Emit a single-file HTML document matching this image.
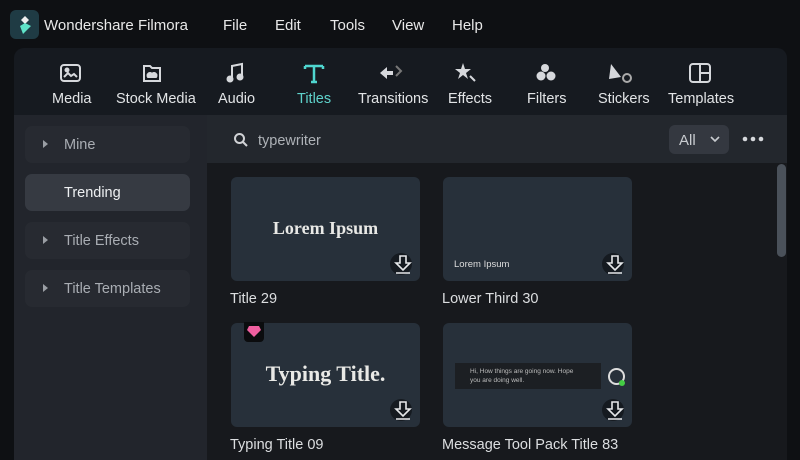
<!DOCTYPE html>
<html><head><style>
*{margin:0;padding:0;box-sizing:border-box}
body{width:800px;height:460px;background:#0e1013;font-family:"Liberation Sans",sans-serif;overflow:hidden;position:relative;color:#e6e8ea}
.a{position:absolute}
.menu{top:17px;font-size:15px;color:#e8e8e8}
.tb{top:48px;left:14px;width:773px;height:67px;background:#161a20;border-radius:10px 10px 0 0}
.tab{position:absolute;top:91px;font-size:14.5px;color:#e2e4e6;text-align:center}
.side{left:14px;top:115px;width:193px;height:345px;background:#22252c}
.it{position:absolute;left:25px;width:165px;height:37px;border-radius:7px;background:#272a31;font-size:14.5px;color:#a9adb3}
.it span{position:absolute;left:39px;top:11px}
.it i{position:absolute;left:18px;top:14px;border-left:5px solid #9a9ea4;border-top:4px solid transparent;border-bottom:4px solid transparent}
.srch{left:207px;top:115px;width:580px;height:48px;background:#23272d}
.grid{left:207px;top:163px;width:580px;height:297px;background:#17191d}
.card{position:absolute;width:189px;height:104px;border-radius:6px;background:#27303a}
.lbl{position:absolute;font-size:14.5px;color:#dcdee0}
.dl{position:absolute;right:8px;bottom:6px;width:22px;height:22px;border-radius:50%;background:#151a20}
.ser{font-family:"Liberation Serif",serif;color:#e9e9e6;position:absolute;width:100%;text-align:center;font-weight:bold}
</style></head><body>
<div class="a" style="left:10px;top:10px;width:29px;height:29px;border-radius:6px;background:#1f3b44"></div>
<svg class="a" style="left:14px;top:13px" width="22" height="24" viewBox="0 0 22 24"><path d="M11 3l4 4-4 4-4-4z" fill="#eee"/><path d="M6 13l5-3 6 3-8 8z" fill="#5fe3c8"/></svg>
<div class="a menu" style="left:44px">Wondershare Filmora</div>
<div class="a menu" style="left:223px">File</div>
<div class="a menu" style="left:275px">Edit</div>
<div class="a menu" style="left:330px">Tools</div>
<div class="a menu" style="left:392px">View</div>
<div class="a menu" style="left:452px">Help</div>
<div class="a tb"></div>
<svg class="a" style="left:0;top:0" width="800" height="115" fill="none" stroke="#d6d8dc" stroke-width="2">
<rect x="61" y="65" width="19" height="16" rx="3"/><path d="M64 77l4-4 3 3 3-2 3 3" /><circle cx="67" cy="70" r="1.5" fill="#d6d8dc"/>
<path d="M144 66h6l2 2h8v13h-16z"/><path d="M148 77h8a2 2 0 0 0-4-3 2 2 0 0 0-4 3z" fill="#d6d8dc"/>
<path d="M232 79v-13l10-2v12"/><circle cx="230" cy="79" r="2.5" fill="#d6d8dc"/><circle cx="240" cy="77" r="2.5" fill="#d6d8dc"/>
<path d="M305 66h18M314 66v16M311 82h6M305 66v3M323 66v3" stroke="#4fd6cf" stroke-width="2.5"/>
<path d="M380 73l7-6v4h6v4h-6v4z" fill="#d6d8dc" stroke="none"/><path d="M396 66l5 5-5 5" stroke="#777"/>
<path d="M463 63l2 6 6 0-5 4 2 6-5-4-5 4 2-6-5-4 6 0z" fill="#d6d8dc" stroke="none"/><path d="M470 76l5 5"/>
<circle cx="545" cy="68" r="4" fill="#d6d8dc" stroke="none"/><circle cx="541" cy="76" r="4.5" fill="#d6d8dc" stroke="none"/><circle cx="551" cy="76" r="4.5" fill="#d6d8dc" stroke="none"/>
<path d="M611 64l10 13-12 2z" fill="#d6d8dc" stroke="none"/><circle cx="627" cy="78" r="4" stroke="#aaa"/>
<rect x="690" y="64" width="20" height="18" rx="3"/><path d="M700 64v18M700 73h10"/>
</svg>
<div class="tab" style="left:52px">Media</div>
<div class="tab" style="left:116px">Stock Media</div>
<div class="tab" style="left:218px">Audio</div>
<div class="tab" style="left:297px;color:#5fd3cc">Titles</div>
<div class="tab" style="left:358px">Transitions</div>
<div class="tab" style="left:448px">Effects</div>
<div class="tab" style="left:527px">Filters</div>
<div class="tab" style="left:598px">Stickers</div>
<div class="tab" style="left:668px">Templates</div>
<div class="a side"></div>
<div class="it" style="top:126px"><i></i><span>Mine</span></div>
<div class="it" style="top:174px;background:#363a42;color:#eef0f2"><span>Trending</span></div>
<div class="it" style="top:222px"><i></i><span>Title Effects</span></div>
<div class="it" style="top:270px"><i></i><span>Title Templates</span></div>
<div class="a srch"></div>
<svg class="a" style="left:233px;top:132px" width="16" height="16" fill="none" stroke="#d0d2d5" stroke-width="2"><circle cx="6.5" cy="6.5" r="4.5"/><path d="M10 10l4 4"/></svg>
<div class="a" style="left:258px;top:133px;font-size:14.5px;color:#aeb2b7">typewriter</div>
<div class="a" style="left:669px;top:125px;width:60px;height:29px;border-radius:6px;background:#343840;font-size:15px;color:#c9ccd0;padding:7px 0 0 10px">All</div>
<svg class="a" style="left:709px;top:134px" width="12" height="10" fill="none" stroke="#c9ccd0" stroke-width="1.6"><path d="M2 3l4 4 4-4"/></svg>
<svg class="a" style="left:742px;top:136px" width="22" height="6" fill="#d6d8dc"><circle cx="3" cy="3" r="2.3"/><circle cx="11" cy="3" r="2.3"/><circle cx="19" cy="3" r="2.3"/></svg>
<div class="a grid"></div>
<div class="a" style="left:777px;top:164px;width:9px;height:93px;border-radius:5px;background:#4a515a"></div>
<div class="card" style="left:231px;top:177px"><div class="ser" style="top:41px;font-size:18px">Lorem Ipsum</div><div class="dl"></div></div>
<div class="card" style="left:443px;top:177px"><div class="a" style="left:11px;top:82px;font-size:9.5px;color:#ddd">Lorem Ipsum</div><div class="dl"></div></div>
<div class="card" style="left:231px;top:323px"><div class="ser" style="top:38px;font-size:22px">Typing Title.</div><div class="dl"></div></div>
<div class="card" style="left:443px;top:323px"><div class="a" style="left:12px;top:40px;width:146px;height:26px;background:#1c1f23;font-size:6.5px;color:#bbb;padding:4px 0 0 15px;line-height:9px">Hi, How things are going now. Hope<br>you are doing well.</div><div class="a" style="left:165px;top:45px;width:17px;height:17px;border-radius:50%;border:2px solid #ddd"></div><div class="a" style="left:176px;top:57px;width:6px;height:6px;border-radius:50%;background:#4c4"></div><div class="dl"></div></div>
<div class="a" style="left:244px;top:322px;width:20px;height:20px;background:#0b0c0e;border-radius:0 0 4px 4px"></div>
<svg class="a" style="left:247px;top:325px" width="14" height="12"><path d="M2 1h10l2 4-7 7-7-7z" fill="#f05fa0"/></svg>
<svg class="a" style="left:0;top:0" width="800" height="460" fill="none" stroke="#e6e8ea" stroke-width="1.6">
<path d="M400 256v7h-4l7 7 7-7h-4v-7zM396 273h14"/>
<path d="M612 256v7h-4l7 7 7-7h-4v-7zM608 273h14"/>
<path d="M400 402v7h-4l7 7 7-7h-4v-7zM396 419h14"/>
<path d="M612 402v7h-4l7 7 7-7h-4v-7zM608 419h14"/>
</svg>
<div class="lbl" style="left:230px;top:291px">Title 29</div>
<div class="lbl" style="left:442px;top:291px">Lower Third 30</div>
<div class="lbl" style="left:230px;top:437px">Typing Title 09</div>
<div class="lbl" style="left:442px;top:437px">Message Tool Pack Title 83</div>
</body></html>
